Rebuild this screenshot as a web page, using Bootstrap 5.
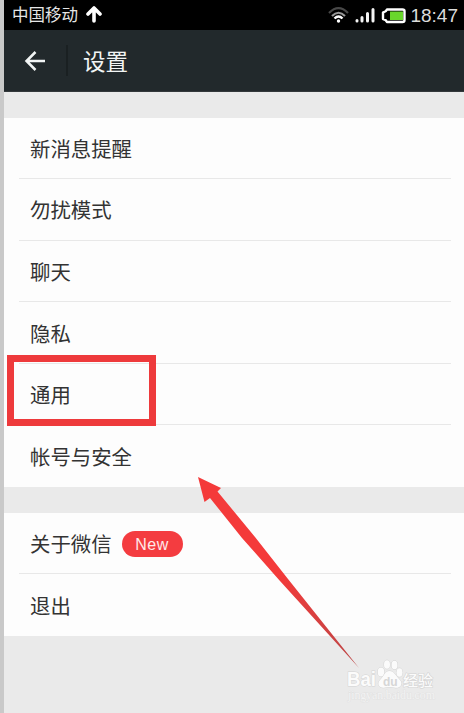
<!DOCTYPE html>
<html lang="zh-CN">
<head>
<meta charset="utf-8">
<meta name="viewport" content="width=device-width, initial-scale=1">
<title>设置</title>
<link href="https://cdn.jsdelivr.net/npm/bootstrap@5.3.0/dist/css/bootstrap.min.css" rel="stylesheet">
<style>
body{font-family:"Liberation Sans","Noto Sans CJK SC",sans-serif;background:#eaeaea;color:#333;height:713px;overflow:hidden}
.screen{height:713px;border-left:4px solid #c9c9c9;background:#eaeaea}
.status-bar{height:30px;background:#000;color:#e6e6e6;padding:0 6px 0 8px}
.carrier{font-size:16.5px;line-height:28px}
.clock{font-size:19px;line-height:30px;padding-top:1px;color:#dcdcdc}
.title-bar{height:61.500px;background:#22292c;color:#f2f5f5;padding-left:20px;border-bottom:1px solid #33393b}
.title-rule{width:2px;height:31px;background:#1a2022;margin-left:20px;margin-right:15px}
.title-text{font-size:22.5px;line-height:32px;padding-top:5px}
.back-icon{margin-top:2px}
.settings{margin-top:26px;padding:0 13px 0 15px;background:#fdfdfd}
.settings + .settings{margin-top:25.5px}
.settings .list-group-item{height:61.6px;padding:4px 0 0 11px;font-size:20.4px;line-height:30px;color:#333;background:transparent;border-color:#e8e8e8}
.new-pill{width:61px;height:26px;background:#f43c40;color:#ffe9e9;font-size:16px;letter-spacing:.5px;font-weight:400;line-height:27px;margin:0 0 2px 10px;padding:0}
.focus-box{left:7px;top:355px;width:149px;height:71px;border:7px solid #ee3a3c}
.overlay{left:0;top:0;pointer-events:none}
</style>
</head>
<body>
<main class="screen">
  <header>
    <div class="status-bar d-flex align-items-center justify-content-between">
      <div class="d-flex align-items-center">
        <span class="carrier">中国移动</span>
        <svg class="ms-2" width="16" height="18" viewBox="0 0 16 18"><path d="M8 2V15M2 8L8 2L14 8" fill="none" stroke="#fff" stroke-width="3.6" stroke-linecap="round" stroke-linejoin="round"/></svg>
      </div>
      <div class="d-flex align-items-center">
        <svg width="78" height="30" viewBox="0 0 78 30" fill="none">
          <path d="M1 13Q10.500 3.500 20 13" stroke="#484848" stroke-width="2.200"/>
          <path d="M4 16Q10.500 9.500 17 16" stroke="#999" stroke-width="2.200"/>
          <path d="M6.500 18.500Q10.500 14.500 14.500 18.500" stroke="#fff" stroke-width="2.400"/>
          <circle cx="10.500" cy="21" r="1.700" fill="#fff"/>
          <path d="M29 20.500V21M34 17.500V21M39.500 13.500V21M45 9.500V21" stroke="#f4f4f4" stroke-width="3" stroke-linecap="round"/>
          <path d="M59 9.500H74.500Q76.500 9.500 76.500 11V20Q76.500 22 74.500 22H59Q58 19.500 55 19V12.500Q58 12 59 9.500Z" stroke="#fff" stroke-width="2.400" stroke-linejoin="round"/>
          <rect x="62" y="11.500" width="13" height="8.500" fill="#69d62b"/>
        </svg>
        <span class="clock ms-1">18:47</span>
      </div>
    </div>
    <div class="title-bar d-flex align-items-center">
      <svg class="back-icon" width="22" height="22" viewBox="0 0 22 22"><path d="M21 11H2.500M11.500 2L2.500 11L11.500 20" fill="none" stroke="#f2f5f5" stroke-width="2.500"/></svg>
      <span class="title-rule"></span>
      <h1 class="title-text fw-normal mb-0">设置</h1>
    </div>
  </header>
  <section class="settings">
    <div class="list-group list-group-flush">
      <div class="list-group-item d-flex align-items-center">新消息提醒</div>
      <div class="list-group-item d-flex align-items-center">勿扰模式</div>
      <div class="list-group-item d-flex align-items-center">聊天</div>
      <div class="list-group-item d-flex align-items-center">隐私</div>
      <div class="list-group-item d-flex align-items-center">通用</div>
      <div class="list-group-item d-flex align-items-center">帐号与安全</div>
    </div>
  </section>
  <section class="settings">
    <div class="list-group list-group-flush">
      <div class="list-group-item d-flex align-items-center">关于微信<span class="badge rounded-pill new-pill">New</span></div>
      <div class="list-group-item d-flex align-items-center">退出</div>
    </div>
  </section>
</main>
<div class="focus-box position-absolute"></div>
<svg class="overlay position-absolute" width="464" height="713" viewBox="0 0 464 713">
  <defs><linearGradient id="shaft" x1="198" y1="477" x2="359" y2="668" gradientUnits="userSpaceOnUse"><stop offset=".5" stop-color="#f43a3a"/><stop offset="1" stop-color="#b94646"/></linearGradient></defs>
  <path d="M198 477L221 488L217.500 491.500L255 537L288 579L359 668L280 581L242 538L210 498L204.500 502Z" fill="url(#shaft)"/>
  <g fill="#fbfbfb" stroke="#d4d4d4" stroke-width="1" paint-order="stroke" font-family="Liberation Sans, Noto Sans CJK SC, sans-serif">
    <text x="347" y="686" font-size="20" font-weight="700" textLength="29" lengthAdjust="spacingAndGlyphs">Bai</text>
    <ellipse cx="381" cy="672" rx="3.300" ry="4.500"/><ellipse cx="387" cy="664.500" rx="3" ry="4.300"/><ellipse cx="394.500" cy="665" rx="3" ry="4.300"/><ellipse cx="399.500" cy="672.500" rx="3" ry="4.300"/>
    <path d="M389.500 671C394 671 396 676 400 680C404 685 399 689 394 687.500Q389.500 686.500 385 687.500C380 689 376 684 380 680C384 676 385 671 389.500 671Z"/>
    <text x="383" y="686" font-size="12" font-weight="700" fill="#d6d6d6" stroke="none">du</text>
    <text x="403" y="686" font-size="15" font-weight="500" stroke-width="1.200">经验</text>
    <text x="348" y="699" font-family="Liberation Serif, serif" font-size="12" fill="#f3f3f3" stroke="#dedede" stroke-width=".7" textLength="87">jingyan.baidu.com</text>
  </g>
</svg>
<script src="https://cdn.jsdelivr.net/npm/bootstrap@5.3.0/dist/js/bootstrap.bundle.min.js"></script>
</body>
</html>
